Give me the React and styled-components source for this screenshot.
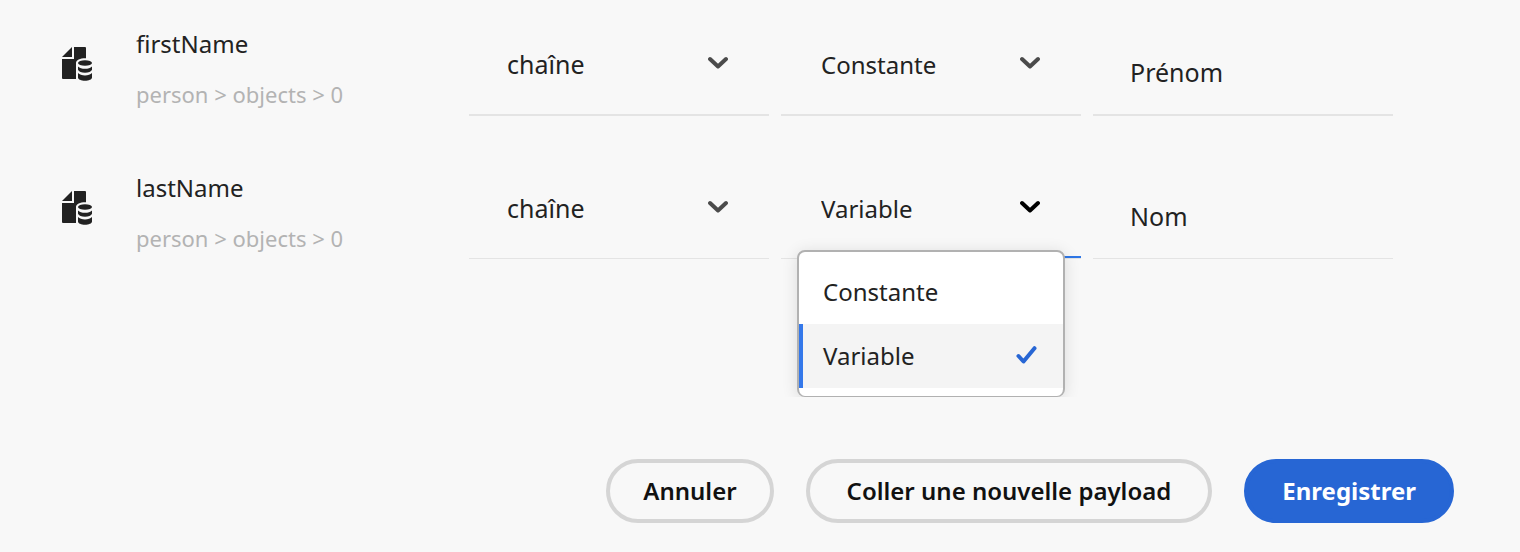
import React from "react";
import styled, { createGlobalStyle } from "styled-components";

const GlobalStyle = createGlobalStyle`
  *, *::before, *::after { box-sizing: border-box; }
  body {
    margin: 0;
    background: #f8f8f8;
    color: #222;
    font-family: "Noto Sans", "Open Sans", sans-serif;
    font-size: 24px;
  }
`;

const Form = styled.form`
  padding-bottom: 28px;
`;

const Rows = styled.div`
  display: flex;
  flex-direction: column;
  gap: 28px;
  padding: 0 127px 0 62px;
`;

const Row = styled.div`
  display: grid;
  grid-template-columns: 62px minmax(0, 321fr) repeat(3, minmax(0, 300fr));
  column-gap: 12px;
  height: 116px;
`;

const FieldIcon = styled.svg`
  display: block;
  width: 32px;
  height: 34px;
  margin-top: 47px;
  fill: #222;
`;

const FieldInfo = styled.div`
  display: flex;
  flex-direction: column;
  gap: 18px;
  padding-top: 28px;
  line-height: 32px;
  white-space: nowrap;
`;

const FieldName = styled.span``;

const FieldPath = styled.span`
  font-size: 22px;
  color: #b3b3b3;
`;

const Cell = styled.div`
  position: relative;
  display: flex;
  align-items: flex-start;
  height: ${(p) => (p.$thin ? "115px" : "116px")};
  border-bottom: ${(p) => (p.$thin ? "1px" : "2px")} solid #e4e4e4;

  ${(p) =>
    p.$open &&
    `&::after {
      content: "";
      position: absolute;
      right: 0;
      bottom: 0;
      width: 50%;
      height: 2px;
      background: #2f77e6;
    }`}
`;

const Select = styled.select`
  appearance: none;
  width: 100%;
  height: 112px;
  padding: 16px 80px 0 ${(p) => (p.$large ? "38px" : "40px")};
  border: 0;
  background: none;
  color: #222;
  font: inherit;
  font-size: ${(p) => (p.$large ? "25px" : "24px")};
  outline: none;
`;

const Chevron = styled.svg`
  position: absolute;
  top: 56px;
  right: 41px;
  width: 20px;
  height: 14px;
  fill: none;
  stroke: ${(p) => (p.$open ? "#000" : "#4b4b4b")};
  stroke-width: 4;
  stroke-linecap: round;
  stroke-linejoin: round;
  pointer-events: none;
`;

const TextInput = styled.input`
  width: 100%;
  height: 112px;
  padding: 32px 37px 0;
  border: 0;
  background: none;
  color: #222;
  font: inherit;
  font-size: 25px;
  outline: none;
`;

const Menu = styled.ul`
  position: absolute;
  z-index: 1;
  top: 106px;
  left: 16px;
  right: 16px;
  margin: 0;
  padding: 8px 0;
  list-style: none;
  background: #fff;
  border: 2px solid #b1b1b1;
  border-bottom-width: 1px;
  border-radius: 8px;
  box-shadow: 0 2px 16px rgba(0, 0, 0, 0.12);
  clip-path: inset(-24px -24px 0 -24px);
`;

const MenuItem = styled.li`
  display: flex;
  align-items: center;
  justify-content: space-between;
  height: 64px;
  padding: 0 26px 2px 20px;
  border-left: 4px solid ${(p) => (p.$selected ? "#3478ea" : "transparent")};
  background: ${(p) => (p.$selected ? "#f4f4f4" : "transparent")};
`;

const CheckIcon = styled.svg`
  flex: none;
  width: 21px;
  height: 18px;
  fill: none;
  stroke: #2766d4;
  stroke-width: 4;
  stroke-linecap: round;
  stroke-linejoin: round;
`;

const Actions = styled.div`
  display: flex;
  justify-content: flex-end;
  gap: 32px;
  padding: 199px 66px 0 32px;
`;

const buttonPadding = { small: "33px", medium: "34px", large: "37px" };

const Button = styled.button`
  height: 64px;
  padding: 0 ${(p) => buttonPadding[p.$size]} 2px;
  border: 4px solid ${(p) => (p.$primary ? "#2766d4" : "#d5d5d5")};
  border-radius: 32px;
  background: ${(p) => (p.$primary ? "#2766d4" : "transparent")};
  color: ${(p) => (p.$primary ? "#fff" : "#111")};
  font: inherit;
  font-weight: ${(p) => (p.$primary ? 700 : 600)};
  white-space: nowrap;
`;

const DatasetIcon = () => (
  <FieldIcon viewBox="0 0 32 34" aria-hidden="true">
    <path d="M0 10 L10 0 V10 Z" />
    <path d="M12 0 H23 Q24 0 24 1 V11.2 C18.5 11 14 12.8 14 16 V32 H1 Q0 32 0 31 V12 H12 Z" />
    <ellipse cx="23" cy="16" rx="7" ry="2.8" />
    <path d="M16 19.4 C17.5 21 20 21.7 23 21.7 S28.5 21 30 19.4 V22.8 C29.2 24.6 26.5 25.7 23 25.7 S16.8 24.6 16 22.8 Z" />
    <path d="M16 26 C17.5 27.6 20 28.4 23 28.4 S28.5 27.6 30 26 V30.6 C30 32.6 26.8 33.8 23 33.8 S16 32.6 16 30.6 Z" />
  </FieldIcon>
);

function SelectField({ label, value, options, thin, open, large }) {
  return (
    <Cell $thin={thin} $open={open}>
      <Select aria-label={label} defaultValue={value} $large={large}>
        {options.map((o) => (
          <option key={o}>{o}</option>
        ))}
      </Select>
      <Chevron viewBox="0 0 20 14" $open={open} aria-hidden="true">
        <path d="M2 3 L10 10.5 L18 3" />
      </Chevron>
      {open && (
        <Menu role="listbox" aria-label={label}>
          {options.map((o) => (
            <MenuItem
              key={o}
              role="option"
              aria-selected={o === value}
              $selected={o === value}
            >
              {o}
              {o === value && (
                <CheckIcon viewBox="0 0 21 18" aria-hidden="true">
                  <path d="M2.5 10 L7.5 15.5 L18.5 2.2" />
                </CheckIcon>
              )}
            </MenuItem>
          ))}
        </Menu>
      )}
    </Cell>
  );
}

const fields = [
  { name: "firstName", kind: "Constante", value: "Prénom" },
  { name: "lastName", kind: "Variable", value: "Nom", open: true, thin: true },
];

export default function App() {
  return (
    <>
      <GlobalStyle />
      <Form onSubmit={(e) => e.preventDefault()}>
        <Rows>
          {fields.map((f) => (
            <Row key={f.name}>
              <DatasetIcon />
              <FieldInfo>
                <FieldName>{f.name}</FieldName>
                <FieldPath>person &gt; objects &gt; 0</FieldPath>
              </FieldInfo>
              <SelectField
                label={`Type ${f.name}`}
                value="chaîne"
                options={["chaîne"]}
                thin={f.thin}
                large
              />
              <SelectField
                label={`Mode ${f.name}`}
                value={f.kind}
                options={["Constante", "Variable"]}
                thin={f.thin}
                open={f.open}
              />
              <Cell $thin={f.thin}>
                <TextInput aria-label={`Libellé ${f.name}`} defaultValue={f.value} />
              </Cell>
            </Row>
          ))}
        </Rows>
        <Actions>
          <Button type="button" $size="small">Annuler</Button>
          <Button type="button" $size="large">Coller une nouvelle payload</Button>
          <Button type="submit" $size="medium" $primary>
            Enregistrer
          </Button>
        </Actions>
      </Form>
    </>
  );
}
